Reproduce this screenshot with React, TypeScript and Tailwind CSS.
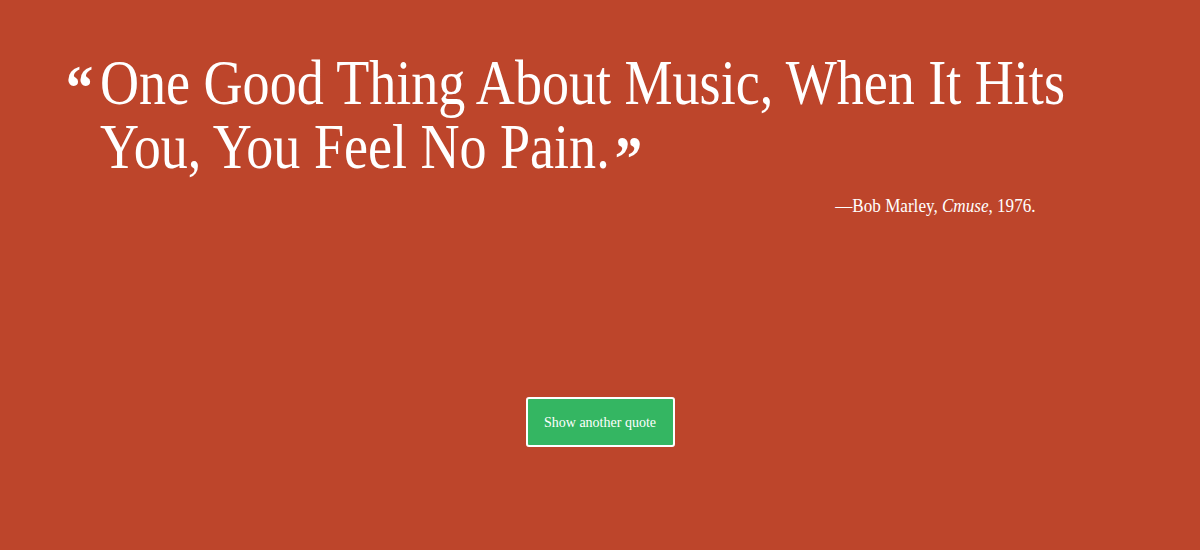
import React from "react";

export default function App() {
  return (
    <div
      className="w-[1200px] h-[550px] bg-[#bd452b] text-white overflow-hidden flex flex-col"
      style={{ fontFamily: '"Liberation Serif", "DejaVu Serif", serif' }}
    >
      <div className="pl-[100px] pt-[52px] h-[194px] relative">
        <div className="origin-top-left scale-x-[0.858] whitespace-nowrap text-[63px] leading-[63px] relative">
          <span className="absolute left-[-40px] top-[4px] text-[64px] font-bold">“</span>
          One Good Thing About Music, When It Hits
          <br />
          You, You Feel No Pain.
          <span className="relative top-[12px] ml-[6px] text-[64px] font-bold leading-none">”</span>
        </div>
      </div>
      <div className="pr-[164px] text-right text-[19px] leading-[24px]">
        <span className="inline-block origin-right scale-x-[0.9]">
          —Bob Marley, <em>Cmuse</em>, 1976.
        </span>
      </div>
      <div className="flex justify-center pt-[179px]">
        <button className="w-[149px] h-[50px] bg-[#34b662] border-2 border-white rounded-[3px] text-[14px] text-white">
          Show another quote
        </button>
      </div>
    </div>
  );
}
